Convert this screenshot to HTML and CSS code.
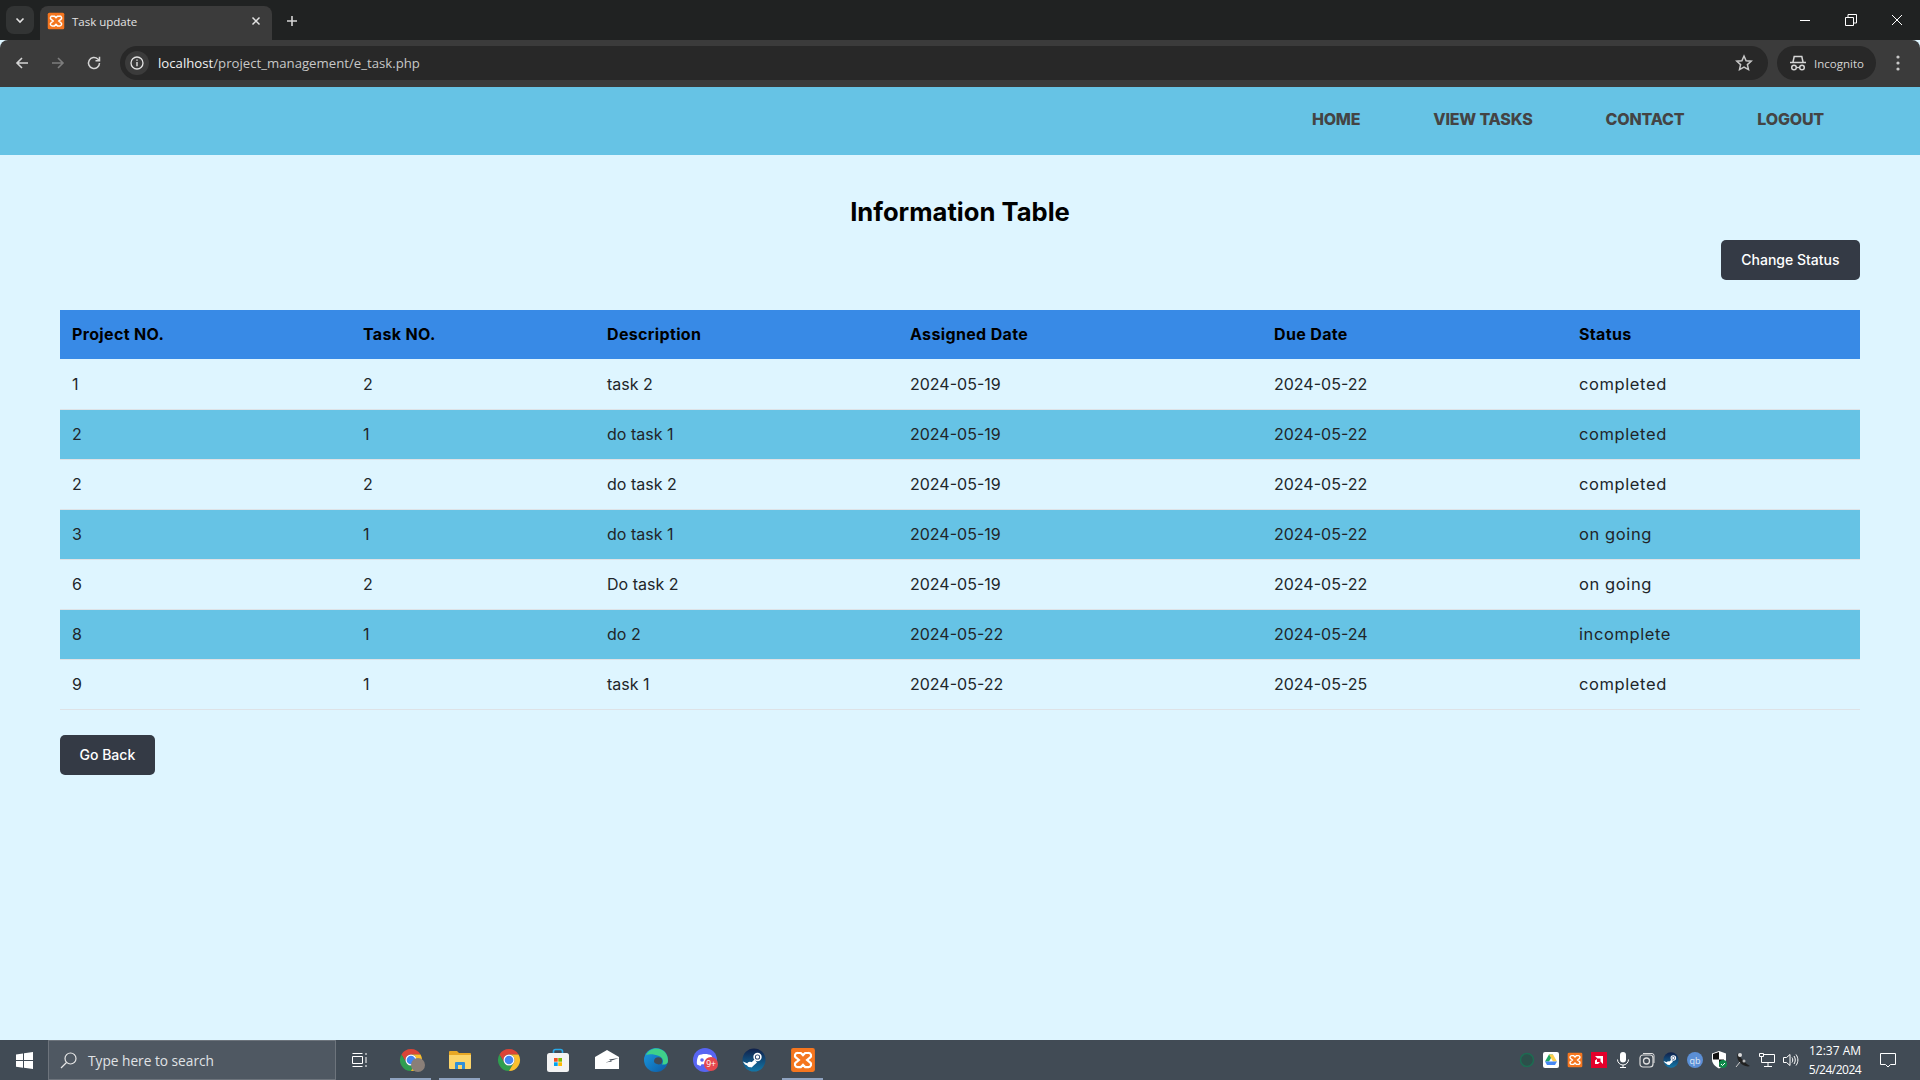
FILE: index.html
```html
<!DOCTYPE html>
<html lang="en">
<head>
    <meta charset="UTF-8">
    <meta name="viewport" content="width=device-width, initial-scale=1.0">
    <title>Task update</title>
    <link rel="stylesheet" href="styles.css">
</head>
<body>
    <svg class="sprites" width="0" height="0">
        <symbol id="xampp" viewBox="0 0 24 24">
            <rect x="1" y="1" width="22" height="22" rx="2" fill="#f5761f"/>
            <path d="M10 5.5H7a2.4 2.4 0 0 0-1.4 4.4L8.2 12l-2.6 2.1A2.4 2.4 0 0 0 7 18.5h3l2-2 2 2h3a2.4 2.4 0 0 0 1.4-4.4L15.800 12l2.600-2.100A2.400 2.400 0 0 0 17 5.500h-3l-2 2z" fill="none" stroke="#fff" stroke-width="2"/>
        </symbol>
        <symbol id="chrome" viewBox="0 0 24 24">
            <path d="M2.470 6.500A11 11 0 0 1 21.530 6.500H12A5.500 5.500 0 0 0 7.240 14.750z" fill="#db4437"/>
            <path d="M2.470 6.500L7.240 14.750A5.500 5.500 0 0 0 16.760 14.750L12 23A11 11 0 0 1 2.470 6.500z" fill="#2f9e4f"/>
            <path d="M21.530 6.500A11 11 0 0 1 12 23L16.760 14.750A5.500 5.500 0 0 0 12 6.500z" fill="#fbc02d"/>
            <circle cx="12" cy="12" r="5.500" fill="#fff"/>
            <circle cx="12" cy="12" r="4.300" fill="#4285f4"/>
        </symbol>
        <symbol id="steam" viewBox="0 0 24 24">
            <defs>
                <linearGradient id="steamfill" x1="0" y1="0" x2="0" y2="1">
                    <stop offset="0" stop-color="#10204a"/>
                    <stop offset="1" stop-color="#1377a8"/>
                </linearGradient>
            </defs>
            <circle cx="12" cy="12" r="11.500" fill="url(#steamfill)"/>
            <path d="M0.800 13.500L7.500 16.300 12.500 11.500 15 14.500 9.500 19.500 3 16.500z" fill="#fff"/>
            <circle cx="15.500" cy="9" r="4.200" fill="#fff"/>
            <circle cx="15.500" cy="9" r="2.600" fill="#14305e"/>
            <circle cx="15.500" cy="9" r="1.800" fill="#fff"/>
            <circle cx="8" cy="16.500" r="2.800" fill="#fff"/>
        </symbol>
    </svg>

    <div class="tabstrip">
        <div class="tab-search">
            <svg width="12" height="12" viewBox="0 0 12 12"><path d="M2.500 4.500L6 8l3.500-3.500" fill="none" stroke="#e3e3e3" stroke-width="1.600"/></svg>
        </div>
        <div class="tab">
            <svg class="favicon" width="18" height="18"><use href="#xampp"/></svg>
            <span class="tab-title">Task update</span>
            <svg class="tab-close" width="10" height="10" viewBox="0 0 10 10"><path d="M1.500 1.500l7 7m0-7l-7 7" stroke="#e3e3e3" stroke-width="1.500"/></svg>
        </div>
        <svg class="new-tab" width="12" height="12" viewBox="0 0 12 12"><path d="M6 1v10M1 6h10" stroke="#d5d5d5" stroke-width="1.600"/></svg>
        <div class="window-controls">
            <svg width="12" height="12" viewBox="0 0 12 12"><path d="M1 6.500h10" stroke="#fff"/></svg>
            <svg width="12" height="12" viewBox="0 0 12 12"><path d="M.5 3.500h8v8h-8zM3 3.500V.5h8.500V9H8.500" fill="none" stroke="#fff"/></svg>
            <svg width="12" height="12" viewBox="0 0 12 12"><path d="M1 1l10 10m0-10L1 11" stroke="#fff"/></svg>
        </div>
    </div>

    <div class="toolbar">
        <svg class="nav-icon" width="16" height="16" viewBox="0 0 16 16"><path d="M14 8H3M8 3L3 8l5 5" fill="none" stroke="#d5d5d5" stroke-width="1.600"/></svg>
        <svg class="nav-icon" width="16" height="16" viewBox="0 0 16 16"><path d="M2 8h11M8 3l5 5-5 5" fill="none" stroke="#7d7d7d" stroke-width="1.600"/></svg>
        <svg class="nav-icon" width="16" height="16" viewBox="0 0 16 16"><path d="M13.500 8A5.500 5.500 0 1 1 11.800 4L13.500 5.500M13.500 1.800v4h-4" fill="none" stroke="#d5d5d5" stroke-width="1.500"/></svg>
        <div class="omnibox">
            <span class="info-chip">
                <svg width="14" height="14" viewBox="0 0 14 14"><circle cx="7" cy="7" r="6" fill="none" stroke="#e3e3e3" stroke-width="1.300"/><path d="M7 6v4.200M7 3.500v1.300" stroke="#e3e3e3" stroke-width="1.400"/></svg>
            </span>
            <span class="url"><span class="url-host">localhost</span>/project_management/e_task.php</span>
            <svg class="star" width="18" height="18" viewBox="0 0 18 18"><path d="M9 2l2.100 4.700 5.100.5-3.800 3.400 1.100 5L9 13l-4.500 2.600 1.100-5L1.800 7.200l5.100-.5z" fill="none" stroke="#c8c8c8" stroke-width="1.500"/></svg>
        </div>
        <div class="incognito">
            <svg width="18" height="18" viewBox="0 0 18 18"><path d="M1 8.500h16M4 8l1.200-5.500h7.600L14 8" fill="none" stroke="#d5d5d5" stroke-width="1.500"/><circle cx="5" cy="13.500" r="2.300" fill="none" stroke="#d5d5d5" stroke-width="1.500"/><circle cx="13" cy="13.500" r="2.300" fill="none" stroke="#d5d5d5" stroke-width="1.500"/><path d="M7.300 13.500h3.400" stroke="#d5d5d5" stroke-width="1.300"/></svg>
            <span>Incognito</span>
        </div>
        <svg class="menu-dots" width="4" height="16" viewBox="0 0 4 16"><circle cx="2" cy="2" r="1.600" fill="#c8c8c8"/><circle cx="2" cy="8" r="1.600" fill="#c8c8c8"/><circle cx="2" cy="14" r="1.600" fill="#c8c8c8"/></svg>
    </div>

    <nav class="site-nav">
        <a href="#">HOME</a>
        <a href="#">VIEW TASKS</a>
        <a href="#">CONTACT</a>
        <a href="#">LOGOUT</a>
    </nav>

    <main class="content">
        <h1>Information Table</h1>
        <div class="actions">
            <a href="#" class="btn">Change Status</a>
        </div>
        <table class="info-table">
            <colgroup>
                <col class="col-project">
                <col class="col-task">
                <col class="col-desc">
                <col class="col-assigned">
                <col class="col-due">
                <col class="col-status">
            </colgroup>
            <thead>
                <tr>
                    <th>Project NO.</th>
                    <th>Task NO.</th>
                    <th>Description</th>
                    <th>Assigned Date</th>
                    <th>Due Date</th>
                    <th>Status</th>
                </tr>
            </thead>
            <tbody>
                <tr><td>1</td><td>2</td><td>task 2</td><td>2024-05-19</td><td>2024-05-22</td><td class="status">completed</td></tr>
                <tr><td>2</td><td>1</td><td>do task 1</td><td>2024-05-19</td><td>2024-05-22</td><td class="status">completed</td></tr>
                <tr><td>2</td><td>2</td><td>do task 2</td><td>2024-05-19</td><td>2024-05-22</td><td class="status">completed</td></tr>
                <tr><td>3</td><td>1</td><td>do task 1</td><td>2024-05-19</td><td>2024-05-22</td><td class="status">on going</td></tr>
                <tr><td>6</td><td>2</td><td>Do task 2</td><td>2024-05-19</td><td>2024-05-22</td><td class="status">on going</td></tr>
                <tr><td>8</td><td>1</td><td>do 2</td><td>2024-05-22</td><td>2024-05-24</td><td class="status">incomplete</td></tr>
                <tr><td>9</td><td>1</td><td>task 1</td><td>2024-05-22</td><td>2024-05-25</td><td class="status">completed</td></tr>
            </tbody>
        </table>
        <a href="#" class="btn btn-back">Go Back</a>
    </main>

    <footer class="taskbar">
        <div class="start">
            <svg width="17" height="17" viewBox="0 0 17 17"><path d="M0 2.400l7-1v6.700H0zM8 1.300L17 0v8.100H8zM0 9h7v6.700l-7-1zM8 9h9v8l-9-1.300z" fill="#fff"/></svg>
        </div>
        <div class="search-box">
            <svg width="17" height="17" viewBox="0 0 17 17"><circle cx="10.500" cy="6.500" r="5.500" fill="none" stroke="#e6e6e6" stroke-width="1.200"/><path d="M6.500 10.500L1 16" stroke="#e6e6e6" stroke-width="1.200"/></svg>
            <span>Type here to search</span>
        </div>
        <div class="task-view">
            <svg width="16" height="16" viewBox="0 0 16 16"><path d="M.5 4.500h10v7H.500zM.5 1.500h10M.5 14.500h10M14 1v2M14 5v6M14 13v2" fill="none" stroke="#fff"/></svg>
        </div>
        <div class="apps">
            <div class="app app-open">
                <svg width="24" height="24"><use href="#chrome"/></svg>
                <span class="profile-dot"></span>
            </div>
            <div class="app app-open">
                <svg width="22" height="20" viewBox="0 0 22 20"><path d="M0 2a1 1 0 0 1 1-1h7l2 2h11a1 1 0 0 1 1 1v2H0z" fill="#e8a825"/><path d="M0 5h22v13a1 1 0 0 1-1 1H1a1 1 0 0 1-1-1z" fill="#fcd56a"/><path d="M6 19v-6a1 1 0 0 1 1-1h8a1 1 0 0 1 1 1v6h-3v-4H9v4z" fill="#2f8fd8"/></svg>
            </div>
            <div class="app">
                <svg width="24" height="24"><use href="#chrome"/></svg>
            </div>
            <div class="app">
                <svg width="24" height="24" viewBox="0 0 24 24"><path d="M7.500 6V3.500A2 2 0 0 1 9.500 1.500h5a2 2 0 0 1 2 2V6" fill="none" stroke="#29a9e8" stroke-width="1.600"/><rect x="1" y="5" width="22" height="19" rx="2.500" fill="#f3f3f3"/><rect x="8" y="10" width="3.700" height="3.700" fill="#f25022"/><rect x="12.300" y="10" width="3.700" height="3.700" fill="#7fba00"/><rect x="8" y="14.300" width="3.700" height="3.700" fill="#00a4ef"/><rect x="12.300" y="14.300" width="3.700" height="3.700" fill="#ffb900"/></svg>
            </div>
            <div class="app">
                <svg width="24" height="20" viewBox="0 0 24 20"><path d="M0 7L12 0l12 7v12H0z" fill="#fff"/><path d="M0 7l10.500 5.500L24 8l-10 1.500 3 2-6.500 1z" fill="#414b55"/></svg>
            </div>
            <div class="app">
                <svg width="24" height="24" viewBox="0 0 24 24"><defs><linearGradient id="edgefill" x1="0" y1="0" x2="1" y2="1"><stop offset="0" stop-color="#1b9de2"/><stop offset="1" stop-color="#0c59a4"/></linearGradient></defs><circle cx="12" cy="12" r="12" fill="url(#edgefill)"/><path d="M2 7C5 1 12-1 18 2c4 2 6 6 6 11 0 3-3 4-6 3.500 2-3 1-7-3-8.500C10 6 5 6 2 7z" fill="#3fd18a"/><path d="M10 13c0-3 4-5 7-3 2 2 1 5 0 6-2 .5-3 .5-4 0-2-.5-3-1.500-3-3z" fill="#414b55"/></svg>
            </div>
            <div class="app">
                <svg width="24" height="24" viewBox="0 0 24 24"><circle cx="12" cy="12" r="12" fill="#5865f2"/><path d="M5.500 7.500C9 5.500 15 5.500 18.500 7.500 20 10.500 20.500 13.500 20 16.500L16.500 18l-1-1.800H8.500l-1 1.800L4 16.500C3.500 13.500 4 10.500 5.500 7.500z" fill="#fff"/><circle cx="9" cy="12" r="1.800" fill="#5865f2"/><circle cx="15" cy="12" r="1.800" fill="#5865f2"/></svg>
                <span class="badge">9+</span>
            </div>
            <div class="app">
                <svg width="24" height="24"><use href="#steam"/></svg>
            </div>
            <div class="app app-open">
                <svg width="26" height="26"><use href="#xampp"/></svg>
            </div>
        </div>
        <div class="tray">
            <div class="tray-icon"><svg width="16" height="16" viewBox="0 0 16 16"><circle cx="8" cy="8" r="6.500" fill="#2c4f4a" stroke="#1d6b52" stroke-width="1.500"/></svg></div>
            <div class="tray-icon"><svg width="16" height="16" viewBox="0 0 16 16"><rect width="16" height="16" rx="2" fill="#fff"/><path d="M6 2.500h4L6 9.500H2z" fill="#1fa463"/><path d="M10 2.500l4 7h-4L6 2.500z" fill="#ffd04b"/><path d="M2 9.500h12l-2 3.500H4z" fill="#4688f4"/></svg></div>
            <div class="tray-icon"><svg width="16" height="16"><use href="#xampp"/></svg></div>
            <div class="tray-icon"><svg width="16" height="16" viewBox="0 0 16 16"><rect width="16" height="16" fill="#e4002b"/><path d="M4 4h8v8l-2.500-2.500V6.500H6.500zM4 12V8.500L6 7v3h3l-2 2z" fill="#fff"/></svg></div>
            <div class="tray-icon"><svg width="14" height="16" viewBox="0 0 14 16"><rect x="4" y="0" width="6" height="10.500" rx="3" fill="#fff"/><path d="M1.500 7.500a5.500 5.500 0 0 0 11 0M7 13v2.500M4 15.500h6" fill="none" stroke="#fff"/></svg></div>
            <div class="tray-icon"><svg width="16" height="16" viewBox="0 0 16 16"><rect x="1" y="3" width="13" height="12" rx="3" fill="none" stroke="#ddd" stroke-width="1.200"/><path d="M4 1.500h9a2 2 0 0 1 2 2V11" fill="none" stroke="#ddd"/><circle cx="7.500" cy="9" r="3" fill="none" stroke="#ddd" stroke-width="1.300"/></svg></div>
            <div class="tray-icon"><svg width="16" height="16"><use href="#steam"/></svg></div>
            <div class="tray-icon tray-qb">qb</div>
            <div class="tray-icon"><svg width="16" height="18" viewBox="0 0 16 18"><path d="M8 0l7 2.500v6c0 4-3 7-7 9-4-2-7-5-7-9v-6z" fill="#fff"/><path d="M8 1v7.500H2v-5.500zM8 8.500h5c0 3-2 5.500-5 7.500z" fill="#111"/><circle cx="12" cy="13" r="4" fill="#0f8a4a"/><path d="M10 13l1.500 1.500 2.500-2.500" fill="none" stroke="#fff"/></svg></div>
            <div class="tray-icon"><svg width="16" height="16" viewBox="0 0 16 16"><path d="M3 1c-2 4 0 9 5 12 2 1 5 2 7 1C11 12 6 7 3 1z" fill="#222"/><circle cx="5" cy="3" r="2" fill="#ddd"/><circle cx="9" cy="9" r="1.500" fill="#bbb"/><path d="M1 15l4-5" stroke="#ccc"/></svg></div>
            <div class="tray-icon"><svg width="16" height="14" viewBox="0 0 16 14"><path d="M.5.500h4v3h-4zM4.500 1.500h11v8h-13v-6M9 9.500v4M5 13.500h8" fill="none" stroke="#fff"/></svg></div>
            <div class="tray-icon"><svg width="16" height="14" viewBox="0 0 16 14"><path d="M.5 4.500h3L7 1.500v11l-3.500-3h-3zM9 4.500c1 1.500 1 3.500 0 5M11 3c1.700 2.500 1.700 5.500 0 8M13 1.500c2.500 3.500 2.500 7.500 0 11" fill="none" stroke="#fff"/></svg></div>
            <div class="clock"><div>12:37 AM</div><div class="clock-date">5/24/2024</div></div>
            <div class="notify"><svg width="16" height="15" viewBox="0 0 16 15"><path d="M.5.500h15v11h-5L8 14l-2.500-2.500h-5z" fill="none" stroke="#fff"/></svg></div>
        </div>
    </footer>
</body>
</html>
```

FILE: styles.css
```css
* {
    box-sizing: border-box;
}
html, body {
    height: 100%;
}
body {
    font-family: Inter, "Open Sans", sans-serif;
    background-color: #def5ff;
    color: #212529;
    margin: 0;
    display: flex;
    flex-direction: column;
    overflow: hidden;
}
a {
    text-decoration: none;
}
.sprites {
    position: absolute;
}

/* browser chrome */
.tabstrip {
    height: 40px;
    flex: none;
    background: #202222;
    display: flex;
    align-items: flex-end;
    padding-left: 6px;
    font-family: "Open Sans", sans-serif;
}
.tab-search {
    width: 28px;
    height: 28px;
    margin-bottom: 6px;
    border-radius: 8px;
    background: #323434;
    display: flex;
    align-items: center;
    justify-content: center;
}
.tab {
    width: 232px;
    height: 34px;
    margin-left: 6px;
    padding: 0 11px 4px 7px;
    background: #3b3b3b;
    border-radius: 8px 8px 0 0;
    display: flex;
    align-items: center;
    color: #e3e3e3;
    font-size: 11.500px;
}
.favicon {
    flex: none;
}
.tab-title {
    margin-left: 7px;
    flex: 1;
}
.new-tab {
    margin: 0 0 13px 14px;
}
.window-controls {
    margin-left: auto;
    display: flex;
    gap: 34px;
    padding-right: 17px;
    align-self: flex-start;
    margin-top: 14px;
}
.toolbar {
    height: 47px;
    flex: none;
    background: #3b3b3b;
    border-radius: 8px 8px 0 0;
    display: flex;
    align-items: center;
    padding: 0 0 1px 14px;
    font-family: "Open Sans", sans-serif;
}
.nav-icon {
    margin-right: 20px;
}
.nav-icon:nth-child(3) {
    margin-right: 18px;
}
.omnibox {
    width: 1648px;
    height: 34px;
    border-radius: 17px;
    background: #282828;
    display: flex;
    align-items: center;
    padding: 0 15px 0 5px;
    color: #c7c7c7;
    font-size: 13.200px;
}
.info-chip {
    width: 24px;
    height: 24px;
    border-radius: 12px;
    background: #3b3b3b;
    display: flex;
    align-items: center;
    justify-content: center;
    margin-right: 9px;
}
.url-host {
    color: #f1f1f1;
}
.star {
    margin-left: auto;
}
.incognito {
    width: 99px;
    height: 34px;
    margin-left: 9px;
    border-radius: 17px;
    background: #282828;
    display: flex;
    align-items: center;
    gap: 7px;
    padding-left: 12px;
    color: #d5d5d5;
    font-size: 11.500px;
}
.menu-dots {
    margin-left: 20px;
}

/* site */
.site-nav {
    height: 68px;
    flex: none;
    background-color: #66c3e5;
    display: flex;
    justify-content: flex-end;
    align-items: center;
    gap: 73px;
    padding: 0 96px 4px 0;
}
.site-nav a {
    color: #444;
    font-size: 16px;
    font-weight: 800;
    letter-spacing: -0.2px;
}
.content {
    flex: 1;
    padding: 39px 60px 0;
}
.content h1 {
    margin: 0;
    text-align: center;
    color: #000;
    font-size: 25.600px;
    line-height: 36px;
    font-weight: 700;
}
.actions {
    display: flex;
    justify-content: flex-end;
    margin-top: 10px;
}
.btn {
    display: inline-flex;
    align-items: center;
    justify-content: center;
    height: 40px;
    padding: 0 20.500px 1px;
    background-color: #343a45;
    color: #fff;
    font-size: 14px;
    font-weight: 500;
    border-radius: 5px;
}
.btn-back {
    margin-top: 25px;
    padding: 0 19.500px 1px;
}
.info-table {
    width: 1800px;
    margin-top: 30px;
    border-collapse: collapse;
    table-layout: fixed;
    font-size: 16px;
}
.col-project { width: 291px; }
.col-task { width: 244px; }
.col-desc { width: 303px; }
.col-assigned { width: 364px; }
.col-due { width: 305px; }
.col-status { width: 293px; }
.info-table th {
    height: 49px;
    padding: 0 12px 1px;
    text-align: left;
    font-weight: 700;
    color: #000;
    background-color: #388ae6;
    letter-spacing: 0.350px;
}
.info-table td {
    height: 50px;
    padding: 0 12px;
    border-bottom: 1px solid #dee2e6;
}
.info-table tbody tr:nth-child(even) td {
    background-color: #66c3e5;
}
.info-table td.status {
    font-size: 16.500px;
    letter-spacing: 0.600px;
}

/* windows taskbar */
.taskbar {
    height: 40px;
    flex: none;
    background: #414b55;
    display: flex;
    align-items: stretch;
    font-family: "Open Sans", sans-serif;
}
.start {
    width: 48px;
    display: flex;
    align-items: center;
    justify-content: center;
}
.search-box {
    width: 288px;
    background: #4f5862;
    border: 1px solid #6d747c;
    display: flex;
    align-items: center;
    gap: 11px;
    padding-left: 11px;
    color: #e0e3e6;
    font-size: 13.700px;
}
.task-view {
    width: 48px;
    display: flex;
    align-items: center;
    justify-content: center;
}
.apps {
    display: flex;
    margin-left: 2px;
}
.app {
    width: 49px;
    position: relative;
    display: flex;
    align-items: center;
    justify-content: center;
}
.app-open::after {
    content: "";
    position: absolute;
    left: 4px;
    right: 4px;
    bottom: 0;
    height: 2px;
    background: #8fa3c0;
}
.profile-dot {
    position: absolute;
    left: 25px;
    top: 18px;
    width: 14px;
    height: 14px;
    border-radius: 7px;
    background: #8a7f78;
}
.badge {
    position: absolute;
    left: 24px;
    top: 17px;
    width: 14px;
    height: 14px;
    border-radius: 7px;
    background: #e5484d;
    color: #fff;
    font-size: 8.500px;
    line-height: 14px;
    text-align: center;
}
.tray {
    margin-left: auto;
    display: flex;
    align-items: center;
    padding-right: 12px;
}
.tray-icon {
    width: 24px;
    display: flex;
    align-items: center;
    justify-content: center;
}
.tray-qb {
    width: 16px;
    height: 16px;
    margin: 0 4px;
    border-radius: 8px;
    background: #5b8fd6;
    color: #dfe9f7;
    font-size: 9px;
}
.clock {
    width: 64px;
    text-align: center;
    color: #fff;
    font-size: 12px;
    line-height: 19px;
}
.clock-date {
    letter-spacing: -0.500px;
}
.notify {
    width: 41px;
    display: flex;
    justify-content: center;
}
```
